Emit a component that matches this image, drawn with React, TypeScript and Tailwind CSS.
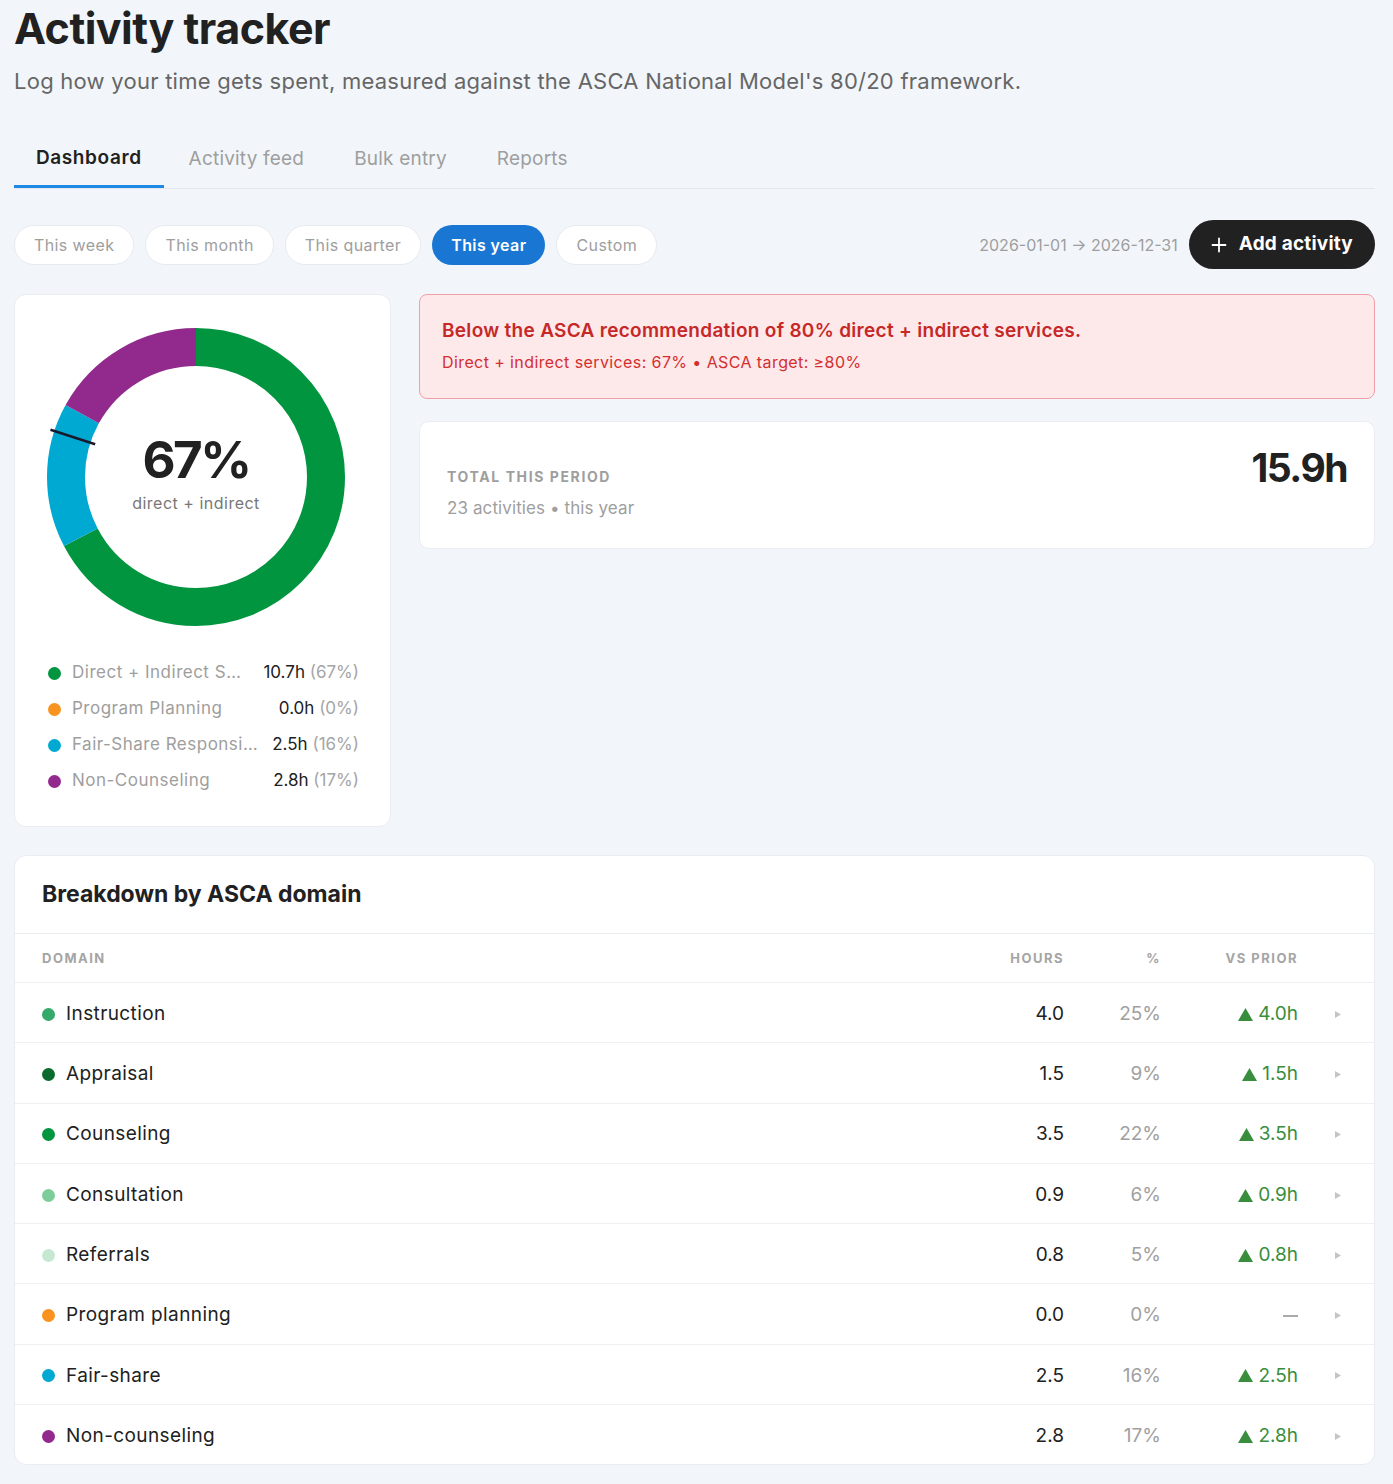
import React from 'react';

// ─── Data ─────────────────────────────────────────────────────────────────────
const ranges = ['This week', 'This month', 'This quarter', 'This year', 'Custom'];
const tabs = ['Dashboard', 'Activity feed', 'Bulk entry', 'Reports'];

const legend = [
  { label: 'Direct + Indirect Services', hours: '10.7h', pct: '(67%)', dot: 'bg-[#02953f]' },
  { label: 'Program Planning', hours: '0.0h', pct: '(0%)', dot: 'bg-[#f7931e]' },
  { label: 'Fair-Share Responsibilities', hours: '2.5h', pct: '(16%)', dot: 'bg-[#00a9d1]' },
  { label: 'Non-Counseling', hours: '2.8h', pct: '(17%)', dot: 'bg-[#922a8d]' },
];

const domains = [
  { name: 'Instruction', hours: '4.0', pct: '25%', delta: '4.0h', dot: 'bg-[#35a96a]' },
  { name: 'Appraisal', hours: '1.5', pct: '9%', delta: '1.5h', dot: 'bg-[#0b6a2d]' },
  { name: 'Counseling', hours: '3.5', pct: '22%', delta: '3.5h', dot: 'bg-[#02953f]' },
  { name: 'Consultation', hours: '0.9', pct: '6%', delta: '0.9h', dot: 'bg-[#7dcd9b]' },
  { name: 'Referrals', hours: '0.8', pct: '5%', delta: '0.8h', dot: 'bg-[#c6e8d3]' },
  { name: 'Program planning', hours: '0.0', pct: '0%', delta: null, dot: 'bg-[#f7931e]' },
  { name: 'Fair-share', hours: '2.5', pct: '16%', delta: '2.5h', dot: 'bg-[#00a9d1]' },
  { name: 'Non-counseling', hours: '2.8', pct: '17%', delta: '2.8h', dot: 'bg-[#922a8d]' },
];

// ─── Donut ────────────────────────────────────────────────────────────────────
function Donut() {
  const cx = 150; const cy = 150; const r = 130; const stroke = 38;
  const circ = 2 * Math.PI * r;
  const segs = [
    { frac: 0.673, color: '#02953f' },
    { frac: 0.0, color: '#f7931e' },
    { frac: 0.157, color: '#00a9d1' },
    { frac: 0.17, color: '#922a8d' },
  ];
  let offset = 0;
  const target = 0.8 * 2 * Math.PI;
  const p = (rad: number) => ({ x: cx + rad * Math.sin(target), y: cy - rad * Math.cos(target) });
  const a = p(106); const b = p(153);

  return (
    <div className="relative w-[300px] h-[300px]">
      <svg width={300} height={300} className="absolute inset-0">
        {segs.map((s, i) => {
          const len = s.frac * circ;
          const el = (
            <circle key={i} cx={cx} cy={cy} r={r} fill="none" stroke={s.color} strokeWidth={stroke}
              strokeDasharray={`${len} ${circ - len}`} strokeDashoffset={-offset}
              transform={`rotate(-90 ${cx} ${cy})`} />
          );
          offset += len;
          return el;
        })}
        <line x1={a.x} y1={a.y} x2={b.x} y2={b.y} stroke="#1a1a2e" strokeWidth={2.5} />
      </svg>
      <div className="absolute inset-0 flex flex-col items-center justify-center">
        <span className="text-[51px] leading-[56px] font-bold text-[#212121] tracking-[-2.5px] mt-[-8px]">67%</span>
        <span className="text-[16px] tracking-[0.5px] text-[#777] mt-[3px]">direct + indirect</span>
      </div>
    </div>
  );
}

// ─── Page ─────────────────────────────────────────────────────────────────────
export default function App() {
  return (
    <div className="min-h-screen bg-[#f2f6fa] font-['Inter',sans-serif] text-[#212121] pl-[14px] pr-[18px] pb-[19px]">
      <h1 className="text-[43px] leading-[52px] font-bold tracking-[-0.5px] pt-[2px]">Activity tracker</h1>
      <p className="text-[22px] leading-[30px] tracking-[0.25px] text-[#666] mt-[12px]">
        Log how your time gets spent, measured against the ASCA National Model's 80/20 framework.
      </p>

      {/* Tabs */}
      <div className="flex mt-[44px] border-b border-[#e3e8ee]">
        {tabs.map((t, i) => (
          <div key={t}
            className={`h-[48px] flex items-center pb-[9px] text-[19px] ${i === 0 ? 'px-[22px] font-semibold tracking-[0.6px] text-[#212121] border-b-[3px] border-[#1e88e5] mb-[-1px]' : 'px-[23px] mx-[2px] tracking-[0.2px] text-[#9e9e9e]'}`}>
            {t}
          </div>
        ))}
      </div>

      {/* Range row */}
      <div className="flex items-center justify-between mt-[31px]">
        <div className="flex gap-[11px]">
          {ranges.map(r => (
            <button key={r}
              className={`h-[40px] px-[19px] rounded-full text-[16px] tracking-[0.4px] ${r === 'This year' ? 'bg-[#1976d2] text-white font-semibold' : 'bg-white border border-[#e6ebf0] text-[#9e9e9e]'}`}>
              {r}
            </button>
          ))}
        </div>
        <div className="flex items-center gap-[11px]">
          <span className="text-[16px] text-[#9e9e9e]">2026-01-01 → 2026-12-31</span>
          <button className="h-[49px] px-[22px] rounded-full bg-[#212121] text-white flex items-center gap-[12px]">
            <svg width={16} height={16} viewBox="0 0 16 16" fill="none" stroke="white" strokeWidth={1.8} strokeLinecap="round">
              <path d="M8 1.5v13M1.5 8h13" />
            </svg>
            <span className="text-[19px] font-bold tracking-[0.2px]">Add activity</span>
          </button>
        </div>
      </div>

      {/* Cards */}
      <div className="flex gap-[28px] mt-[25px] items-start">
        <div className="w-[377px] shrink-0 bg-white rounded-[12px] border border-[#e9edf1] pt-[32px] pb-[27px]">
          <div className="pl-[31px]">
            <Donut />
          </div>
          <div className="pl-[33px] pr-[31px] mt-[28px] flex flex-col">
            {legend.map(l => (
              <div key={l.label} className="h-[36px] flex items-center gap-[14px]">
                <div className="flex items-center gap-[11px] flex-1 min-w-0">
                  <span className={`w-[13px] h-[13px] rounded-full shrink-0 ${l.dot}`} />
                  <span className="text-[17px] tracking-[0.5px] text-[#9e9e9e] truncate">{l.label}</span>
                </div>
                <span className="shrink-0 text-[17px] text-[#212121]">
                  {l.hours} <span className="text-[#a5a5a5]">{l.pct}</span>
                </span>
              </div>
            ))}
          </div>
        </div>

        <div className="flex-1 flex flex-col gap-[22px]">
          <div className="bg-[#fde8ea] border border-[#f0a0a6] rounded-[8px] px-[22px] pt-[23px] pb-[24px]">
            <p className="text-[19px] leading-[26px] font-semibold tracking-[0.3px] text-[#c62828]">
              Below the ASCA recommendation of 80% direct + indirect services.
            </p>
            <p className="text-[16px] leading-[24px] tracking-[0.4px] text-[#d32f2f] mt-[6px]">
              Direct + indirect services: 67% • ASCA target: ≥80%
            </p>
          </div>

          <div className="bg-white border border-[#e9edf1] rounded-[10px] px-[27px] pt-[23px] pb-[28px] flex justify-between items-start">
            <div>
              <p className="mt-[22px] text-[14px] leading-[20px] font-bold tracking-[1.6px] text-[#9e9e9e] uppercase">Total this period</p>
              <p className="mt-[9px] text-[17px] leading-[24px] tracking-[0.1px] text-[#9e9e9e]">23 activities • this year</p>
            </div>
            <span className="text-[39px] leading-[46px] font-bold tracking-[-1.5px] text-[#212121]">15.9h</span>
          </div>
        </div>
      </div>

      {/* Breakdown */}
      <div className="mt-[28px] bg-white rounded-[12px] border border-[#e9edf1] overflow-hidden">
        <h2 className="px-[27px] pt-[23px] pb-[24px] text-[23px] leading-[30px] font-bold text-[#212121]">
          Breakdown by ASCA domain
        </h2>
        <div className="grid grid-cols-[1fr_120px_97px_137px_76px] pl-[27px] h-[49px] pt-[2px] items-center border-t border-[#ebeef1] text-[13px] font-bold tracking-[1.5px] text-[#a5a5a5] uppercase">
          <span>Domain</span>
          <span className="text-right">Hours</span>
          <span className="text-right">%</span>
          <span className="text-right">vs prior</span>
          <span />
        </div>
        {domains.map(d => (
          <div key={d.name}
            className="grid grid-cols-[1fr_120px_97px_137px_76px] pl-[27px] h-[60.3px] pt-[3px] items-center border-t border-[#eef0f2] text-[19px]">
            <div className="flex items-center gap-[11px]">
              <span className={`w-[13px] h-[13px] rounded-full ${d.dot}`} />
              <span className="text-[#212121] tracking-[0.4px]">{d.name}</span>
            </div>
            <span className="text-right text-[#212121]">{d.hours}</span>
            <span className="text-right text-[#a0a0a0]">{d.pct}</span>
            <span className="text-right text-[#388e3c] flex items-center justify-end gap-[5px]">
              {d.delta ? (
                <>
                  <svg width={15} height={13} viewBox="0 0 15 13"><path d="M7.5 0L15 13H0Z" fill="#388e3c" /></svg>
                  {d.delta}
                </>
              ) : (
                <span className="inline-block w-[15px] h-[2px] bg-[#aaa]" />
              )}
            </span>
            <span className="flex justify-center pl-[4px]">
              <svg width={6} height={7} viewBox="0 0 6 7"><path d="M0 0L6 3.5L0 7Z" fill="#c4c4c4" /></svg>
            </span>
          </div>
        ))}
      </div>
    </div>
  );
}
